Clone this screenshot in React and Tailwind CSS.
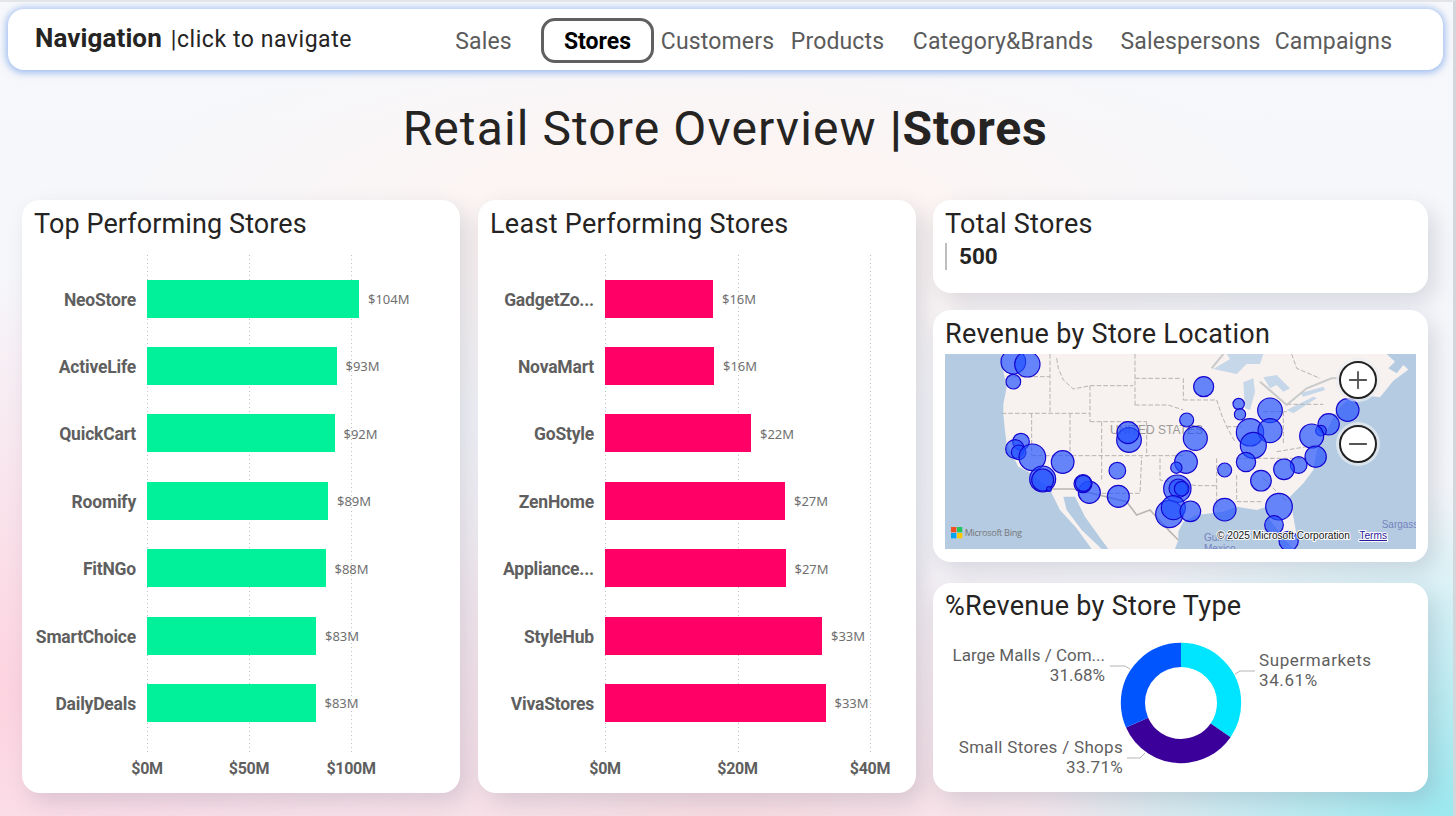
import { Plus, Minus } from "lucide-react";

const navItems = [
  { label: "Sales", w: "w-[115px]" },
  { label: "Stores", w: "w-[113px]", active: true },
  { label: "Customers", w: "w-[127px]" },
  { label: "Products", w: "w-[113px]" },
  { label: "Category&Brands", w: "w-[218px]" },
  { label: "Salespersons", w: "w-[157px]" },
  { label: "Campaigns", w: "w-[129px]" },
];

const topStores = [
  { name: "NeoStore", width: 212, value: "$104M" },
  { name: "ActiveLife", width: 189.5, value: "$93M" },
  { name: "QuickCart", width: 187.5, value: "$92M" },
  { name: "Roomify", width: 181, value: "$89M" },
  { name: "FitNGo", width: 178.5, value: "$88M" },
  { name: "SmartChoice", width: 169, value: "$83M" },
  { name: "DailyDeals", width: 168.5, value: "$83M" },
];

const leastStores = [
  { name: "GadgetZo...", width: 108, value: "$16M" },
  { name: "NovaMart", width: 109, value: "$16M" },
  { name: "GoStyle", width: 146, value: "$22M" },
  { name: "ZenHome", width: 180, value: "$27M" },
  { name: "Appliance...", width: 180.5, value: "$27M" },
  { name: "StyleHub", width: 217, value: "$33M" },
  { name: "VivaStores", width: 220.5, value: "$33M" },
];

// cx, cy, r in the map's viewBox units (3 units = 1px)
const bubbles = [
  [250, 50, 37], [292, 58, 38], [250, 110, 22], [821, 125, 30], [926, 177, 17], [930, 208, 17],
  [1020, 196, 37], [1253, 195, 34], [1196, 238, 32], [1173, 257, 16], [1145, 273, 36], [960, 262, 41],
  [1020, 257, 36], [970, 301, 39], [1157, 335, 32], [1106, 360, 25], [1062, 373, 31], [948, 351, 29],
  [884, 375, 21], [993, 407, 31], [770, 225, 21], [796, 280, 36], [597, 285, 37], [594, 263, 33],
  [273, 290, 25], [255, 312, 28], [266, 322, 22], [307, 337, 40], [398, 351, 34], [338, 402, 39],
  [338, 405, 33], [357, 432, 7], [562, 377, 25], [478, 442, 33], [459, 416, 27], [460, 415, 24],
  [565, 454, 33], [768, 351, 34], [739, 368, 17], [742, 431, 41], [745, 430, 28], [755, 431, 22],
  [718, 507, 41], [730, 488, 36], [781, 499, 31], [884, 494, 34], [1047, 485, 40], [1032, 540, 28],
  [1076, 588, 29],
];

const stateLines = [
  "M230 95H360", "M360 27V205", "M380 40L385 70L400 105L430 132L480 122", "M215 205H480",
  "M480 122H610", "M480 122V230", "M615 27V180", "M615 100H750", "M615 180H715L760 195",
  "M480 230H650", "M515 230V410", "M650 230V335", "M305 205V330", "M420 205V330", "M305 332H760",
  "M515 445H630L635 335", "M690 340V405L800 422H860", "M760 100V165", "M760 165H860L875 210L890 245L915 290",
  "M860 340V485", "M920 390V470H1000", "M1000 200H1070", "M1070 178H1180", "M1085 27L1100 70L1170 100",
  "M920 340H1130", "M1000 400L1070 470", "M1040 320L1160 300", "M1060 200V300", "M890 245H935",
];

function Card({ className, children }) {
  return (
    <div className={`bg-white rounded-[18px] shadow-[7px_9px_22px_rgba(90,95,120,0.2)] ${className}`}>
      {children}
    </div>
  );
}

function CardTitle({ children, tracking = "tracking-[0.3px]" }) {
  return <h3 className={`text-[27px] leading-[36px] text-[#252423] font-normal ${tracking}`}>{children}</h3>;
}

function BarChartCard({ title, titleTracking, rows, color, labelWidth, ticks, tickGap }) {
  return (
    <Card className="w-[438px] h-[593px] pt-[6px] px-[12px]">
      <CardTitle tracking={titleTracking}>{title}</CardTitle>
      <div className="relative mt-[23px] -mx-[12px]">
        {/* gridlines */}
        {ticks.map((t, i) => (
          <div
            key={t}
            className="absolute top-[-10px] h-[500px] w-px bg-[repeating-linear-gradient(180deg,#c2c2c2_0,#c2c2c2_1px,transparent_1px,transparent_4px)]"
            style={{ left: labelWidth + i * tickGap }}
          />
        ))}
        <div className="relative flex flex-col">
          {rows.map((r) => (
            <div key={r.name} className="flex items-center h-[67.4px]">
              <div
                className="shrink-0 pr-[11px] pt-[2px] text-right text-[17.5px] font-bold text-[#5f5f5f] tracking-[-0.2px]"
                style={{ width: labelWidth }}
              >
                {r.name}
              </div>
              <div className="h-[38px]" style={{ width: r.width, backgroundColor: color }} />
              <span className="ml-[9px] pt-[2px] text-[13px] text-[#707070] font-['Noto_Sans',sans-serif]">{r.value}</span>
            </div>
          ))}
        </div>
        {/* axis labels */}
        <div className="flex mt-[20px]" style={{ marginLeft: labelWidth - tickGap / 2 }}>
          {ticks.map((t) => (
            <div
              key={t}
              className="shrink-0 text-center text-[16px] tracking-[-0.3px] font-bold text-[#5f5f5f]"
              style={{ width: tickGap }}
            >
              {t}
            </div>
          ))}
        </div>
      </div>
    </Card>
  );
}

function UsMap() {
  return (
    <svg viewBox="45 27 1413 585" className="block w-[471px] h-[195px]">
      <rect x="45" y="27" width="1413" height="585" fill="#b4cbe2" />
      {/* land */}
      <path
        d="M215 27L220 77L230 127L220 177L220 207L225 257L230 297L265 365L295 380L365 435L365 445L390 495L440 550L485 612H515L455 555L410 495L400 455H435L465 515L515 585L535 612H735L745 585L745 560L760 530L800 510L880 500L920 485L980 495L1010 485L1020 525L1070 590L1090 612L1105 600L1090 515L1080 455L1120 415L1150 375L1160 317L1190 257L1220 197L1270 147L1350 157L1390 107L1458 57V27Z"
        fill="#f7f2ef"
      />
      {/* gulf of st lawrence */}
      <path d="M1370 27H1458V95L1420 60L1400 85L1375 70L1395 50Z" fill="#b4cbe2" />
      {/* great lakes */}
      <g fill="#c6d7e9">
        <path d="M850 72L900 42L890 27H1000L990 57L950 57L920 87Z" />
        <path d="M940 112L970 100L975 140L960 195L945 190Z" />
        <path d="M1000 97L1040 90L1080 130L1060 140L1040 120L1020 130Z" />
        <path d="M1070 195L1150 155L1160 160L1090 205Z" />
        <path d="M1110 145L1180 125L1185 135L1120 155Z" />
      </g>
      {/* state lines */}
      <g fill="none" stroke="#b7b3b0" strokeWidth="3" strokeDasharray="14 6">
        {stateLines.map((d) => (
          <path key={d} d={d} />
        ))}
      </g>
      {/* borders */}
      <path
        d="M365 432H430L515 452L590 470L620 510L660 495L720 560L745 585"
        fill="none"
        stroke="#bab6b3"
        strokeWidth="5"
      />
      <path
        d="M845 70L880 27M990 110L1070 180L1130 130L1205 100H1290"
        fill="none"
        stroke="#c9cacb"
        strokeWidth="6"
      />
      <text x="540" y="268" fontFamily="Liberation Sans, sans-serif" fontSize="36" fill="#9b9997">
        UNITED STATES
      </text>
      <g fontFamily="Liberation Sans, sans-serif" fontSize="30" fill="#7483bd">
        <text x="1355" y="550">Sargass</text>
        <text x="822" y="587">Gulf of</text>
        <text x="822" y="622">Mexico</text>
      </g>
      {bubbles.map(([cx, cy, r], i) => (
        <circle key={i} cx={cx} cy={cy} r={r} fill="#1f4fff" fillOpacity="0.68" stroke="#1505cf" strokeWidth="3.5" />
      ))}
      {/* bing logo */}
      <rect x="63" y="546" width="16" height="16" fill="#f25022" />
      <rect x="81" y="546" width="16" height="16" fill="#22c55e" />
      <rect x="63" y="564" width="16" height="16" fill="#00a4ef" />
      <rect x="81" y="564" width="16" height="16" fill="#ffc800" />
      <text x="104" y="573" fontFamily="Open Sans, sans-serif" fontSize="27.5" fill="#777777" letterSpacing="-1">
        Microsoft Bing
      </text>
      <g fontFamily="Liberation Sans, sans-serif" fontSize="30.5" stroke="#ffffff" strokeWidth="6" paintOrder="stroke">
        <text x="861" y="582" fill="#111111">© 2025 Microsoft Corporation</text>
        <text x="1288" y="582" fill="#2a1a9c" textDecoration="underline">Terms</text>
      </g>
    </svg>
  );
}

function Donut() {
  // donut centre sits at (73, 61) in this 150x122 box
  return (
    <svg viewBox="0 0 150 122" className="block w-[150px] h-[122px] shrink-0">
      <path d="M2 24H17L22 27" fill="none" stroke="#b5b5b5" strokeWidth="1" />
      <path d="M19 116H32L37 111" fill="none" stroke="#b5b5b5" strokeWidth="1" />
      <path d="M127 32L132 29H147" fill="none" stroke="#b5b5b5" strokeWidth="1" />
      <g fill="none" strokeWidth="24.2" transform="rotate(-90 73 61)">
        <circle cx="73" cy="61" r="48.1" stroke="#00e5ff" pathLength="100" strokeDasharray="34.61 100" />
        <circle cx="73" cy="61" r="48.1" stroke="#3a0099" pathLength="100" strokeDasharray="33.71 100" strokeDashoffset="-34.61" />
        <circle cx="73" cy="61" r="48.1" stroke="#0055ff" pathLength="100" strokeDasharray="31.68 100" strokeDashoffset="-68.32" />
      </g>
    </svg>
  );
}

export default function App() {
  return (
    <div className="w-[1456px] h-[816px] overflow-hidden border-t-[2px] border-r-[3px] border-t-[#e3e5e9] border-r-[#d3d7dc] font-['Roboto',sans-serif] text-[#252423] bg-[radial-gradient(ellipse_420px_330px_at_100%_100%,#9be8ef_0%,rgba(155,232,239,0)_100%),radial-gradient(ellipse_600px_420px_at_0%_85%,#fdd3e0_0%,rgba(253,211,224,0)_100%),radial-gradient(ellipse_700px_300px_at_50%_100%,#f8dbe2_0%,rgba(248,219,226,0)_100%),radial-gradient(ellipse_600px_200px_at_48%_27%,#fff3ef_0%,rgba(255,243,239,0)_100%),linear-gradient(180deg,#f7f8fb_0%,#f4f5f9_100%)]">
      {/* Nav bar */}
      <nav className="ml-[8px] mt-[7px] w-[1435px] h-[61px] bg-white rounded-[16px] flex items-center shadow-[0_1px_7px_2px_rgba(130,170,235,0.75)]">
        <div className="w-[418px] pl-[27px] -mt-[3px] flex items-baseline">
          <span className="text-[26px] font-bold tracking-[0.1px]">Navigation</span>
          <span className="ml-[9px] text-[23px] tracking-[0.55px]">|click to navigate</span>
        </div>
        {navItems.map((item) =>
          item.active ? (
            <div
              key={item.label}
              className={`${item.w} mt-[2px] pt-[3px] h-[45px] flex items-center justify-center rounded-[14px] border-[3px] border-[#606060] text-[23px] font-bold text-black`}
            >
              {item.label}
            </div>
          ) : (
            <div key={item.label} className={`${item.w} mt-[6px] text-center text-[23px] tracking-[0.15px] text-[#5b5b5b]`}>
              {item.label}
            </div>
          )
        )}
      </nav>

      {/* Page title */}
      <h1 className="mt-[24px] h-[70px] text-center text-[48px] leading-[70px] tracking-[1.1px] font-normal text-[#252423] pr-[3px]">
        Retail Store Overview <span className="font-bold tracking-[0.8px]">|Stores</span>
      </h1>

      {/* Main grid */}
      <main className="mt-[36px] ml-[22px] flex gap-[18px]">
        <BarChartCard
          title="Top Performing Stores"
          titleTracking="tracking-[0.1px]"
          rows={topStores}
          color="#00f199"
          labelWidth={125}
          ticks={["$0M", "$50M", "$100M"]}
          tickGap={102}
        />
        <BarChartCard
          title="Least Performing Stores"
          rows={leastStores}
          color="#ff0066"
          labelWidth={127}
          ticks={["$0M", "$20M", "$40M"]}
          tickGap={132.5}
        />

        <div className="-ml-[1px] w-[495px] flex flex-col">
          <Card className="h-[93px] pt-[6px] px-[12px]">
            <CardTitle>Total Stores</CardTitle>
            <div className="mt-[1px] flex items-center h-[27px] border-l-[2px] border-[#bdbdbd] pl-[12px]">
              <span className="pt-[1px] text-[22.5px] font-bold">500</span>
            </div>
          </Card>

          <Card className="mt-[17px] h-[252px] pt-[6px] px-[12px]">
            <CardTitle>Revenue by Store Location</CardTitle>
            <div className="relative mt-[2px]">
              <UsMap />
              {/* zoom controls */}
              <div className="absolute left-[394px] top-[7px] w-[38px] h-[38px] rounded-full bg-white border-2 border-[#222222] flex items-center justify-center shadow-[0_0_0_3px_rgba(235,238,242,0.7)]">
                <Plus size={28} strokeWidth={1.6} color="#555555" />
              </div>
              <div className="absolute left-[394px] top-[71px] w-[38px] h-[38px] rounded-full bg-white border-2 border-[#222222] flex items-center justify-center shadow-[0_0_0_3px_rgba(235,238,242,0.7)]">
                <Minus size={28} strokeWidth={1.6} color="#555555" />
              </div>
            </div>
          </Card>

          <Card className="mt-[21px] h-[209px] pt-[5px] px-[12px]">
            <CardTitle>%Revenue by Store Type</CardTitle>
            <div className="mt-[18px] -ml-[12px] flex text-[17px] leading-[20px] tracking-[0.3px] text-[#5f5f5f]">
              <div className="w-[175px] shrink-0 flex flex-col items-end pt-[3px]">
                <div className="mr-[3px] text-right whitespace-nowrap tracking-[0px]">
                  Large Malls / Com...
                  <br />
                  31.68%
                </div>
                <div className="mt-[52px] -mr-[15px] text-right whitespace-nowrap">
                  Small Stores / Shops
                  <br />
                  33.71%
                </div>
              </div>
              <Donut />
              <div className="ml-[1px] pt-[8px] tracking-[0.6px]">
                Supermarkets
                <br />
                34.61%
              </div>
            </div>
          </Card>
        </div>
      </main>
    </div>
  );
}
